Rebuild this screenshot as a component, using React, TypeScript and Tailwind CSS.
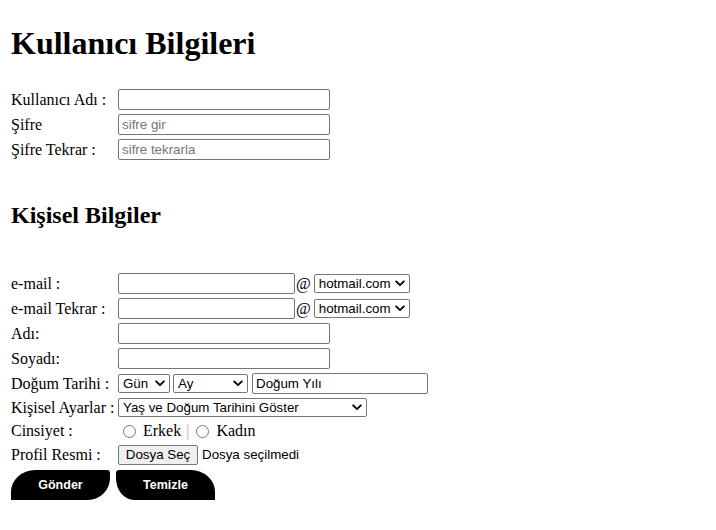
import React from "react";

const serif = { fontFamily: '"Liberation Serif", "Times New Roman", serif' };

function Chevron() {
  return (
    <svg width="10" height="7" viewBox="0 0 10 7" className="shrink-0">
      <path d="M1.2 1.4 L5 5.2 L8.8 1.4" fill="none" stroke="#000" strokeWidth="1.9" strokeLinecap="round" strokeLinejoin="round" />
    </svg>
  );
}

function TextBox({ w, placeholder, value }: { w: number | string; placeholder?: string; value?: string }) {
  return (
    <div
      className="h-[21px] border border-[#767676] rounded-[2px] bg-white flex items-center px-[3px] text-[13.33px] font-['Liberation_Sans',Arial,sans-serif] whitespace-nowrap overflow-hidden"
      style={{ width: w }}
    >
      {value ? <span className="text-black">{value}</span> : placeholder ? <span className="text-[#757575]">{placeholder}</span> : null}
    </div>
  );
}

function Select({ w, label }: { w: number; label: string }) {
  return (
    <div
      className="h-[19px] border border-[#767676] rounded-[2px] bg-white flex items-center justify-between pl-[4px] pr-[4px] text-[13.33px] font-['Liberation_Sans',Arial,sans-serif] whitespace-nowrap text-black"
      style={{ width: w }}
    >
      <span>{label}</span>
      <Chevron />
    </div>
  );
}

function Radio() {
  return <div className="w-[13px] h-[13px] rounded-full border border-[#767676] bg-white shrink-0" />;
}

function Row({ label, children, h = 25 }: { label: string; children?: React.ReactNode; h?: number }) {
  return (
    <div className="flex items-center" style={{ height: h }}>
      <div className="w-[107px] shrink-0 text-[16px] leading-[18px] whitespace-nowrap">{label}</div>
      <div className="flex items-center">{children}</div>
    </div>
  );
}

export default function App() {
  return (
    <div className="bg-white text-black min-h-[530px] pl-[11px] pt-[25px]" style={serif}>
      <h1 className="text-[32px] font-bold leading-[37px]">Kullanıcı Bilgileri</h1>

      <div className="mt-[25px] flex flex-col">
        <Row label="Kullanıcı Adı :">
          <TextBox w={212} />
        </Row>
        <Row label="Şifre">
          <TextBox w={212} placeholder="sifre gir" />
        </Row>
        <Row label="Şifre Tekrar :">
          <TextBox w={212} placeholder="sifre tekrarla" />
        </Row>
      </div>

      <h2 className="mt-[39px] text-[24px] font-bold leading-[28px]">Kişisel Bilgiler</h2>

      <div className="mt-[42px] flex flex-col">
        <Row label="e-mail :">
          <TextBox w={177} />
          <span className="text-[16px] ml-[1px] mr-[3px]">@</span>
          <Select w={96} label="hotmail.com" />
        </Row>
        <Row label="e-mail Tekrar :">
          <TextBox w={177} />
          <span className="text-[16px] ml-[1px] mr-[3px]">@</span>
          <Select w={96} label="hotmail.com" />
        </Row>
        <Row label="Adı:">
          <TextBox w={212} />
        </Row>
        <Row label="Soyadı:">
          <TextBox w={212} />
        </Row>
        <Row label="Doğum Tarihi :">
          <div className="flex items-center gap-[3px]">
            <Select w={52} label="Gün" />
            <Select w={75} label="Ay" />
            <div className="ml-[1px]">
              <TextBox w={176} value="Doğum Yılı" />
            </div>
          </div>
        </Row>
        <Row label="Kişisel Ayarlar :" h={23}>
          <Select w={249} label="Yaş ve Doğum Tarihini Göster" />
        </Row>
        <Row label="Cinsiyet :" h={24}>
          <div className="flex items-center text-[16px] ml-[5px]">
            <Radio />
            <span className="ml-[7px]">Erkek</span>
            <span className="ml-[5px] text-[#eba75a]">|</span>
            <span className="ml-[7px]"><Radio /></span>
            <span className="ml-[7px]">Kadın</span>
          </div>
        </Row>
        <Row label="Profil Resmi :" h={24}>
          <div className="flex items-center font-['Liberation_Sans',Arial,sans-serif] text-[13.33px]">
            <div className="h-[20px] w-[80px] border border-[#767676] rounded-[2px] bg-[#efefef] flex items-center justify-center">
              Dosya Seç
            </div>
            <span className="ml-[4px]">Dosya seçilmedi</span>
          </div>
        </Row>
      </div>

      <div className="mt-[3px] flex gap-[6px] font-['Liberation_Sans',Arial,sans-serif]">
        <div className="w-[99px] h-[30px] bg-black text-white text-[12.5px] font-bold flex items-center justify-center rounded-tl-[24px_22px] rounded-br-[22px_22px] rounded-tr-[3px]">
          Gönder
        </div>
        <div className="w-[99px] h-[30px] bg-black text-white text-[12.5px] font-bold flex items-center justify-center rounded-tr-[24px_22px] rounded-bl-[18px_22px] rounded-tl-[3px]">
          Temizle
        </div>
      </div>
    </div>
  );
}
